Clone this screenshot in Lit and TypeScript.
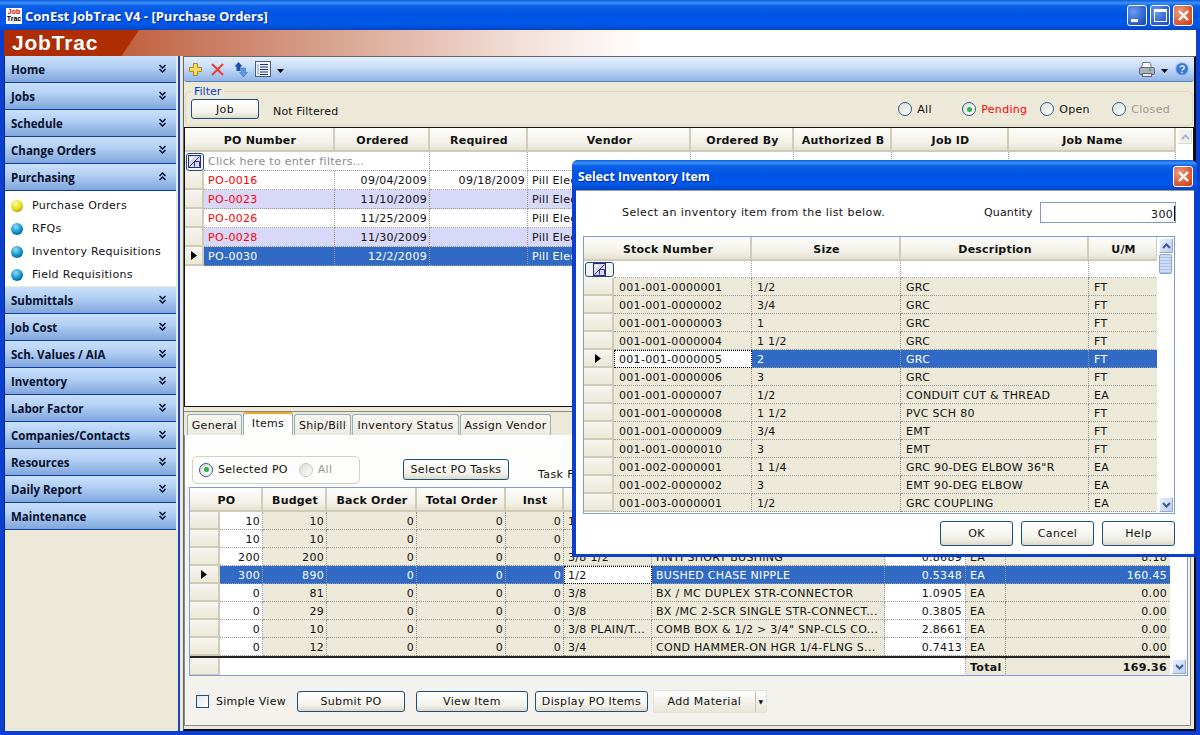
import { LitElement, html, css } from "lit";
import { customElement } from "lit/decorators.js";

type Col = { w: number; label: string; right?: boolean; white?: boolean; wide?: boolean };

const chev = (up = false) => html`<svg class="chev" width="7" height="9" viewBox="0 0 7 9">
  <path d="${up ? "M.5 4 3.500 1 6.500 4M.5 8 3.500 5 6.500 8" : "M.5 1 3.500 4 6.500 1M.5 5 3.500 8 6.500 5"}" fill="none" stroke="#06102c" stroke-width="1.500"/></svg>`;
const filterIcon = () => html`<svg width="13" height="13" viewBox="0 0 13 13">
  <rect x=".5" y=".5" width="12" height="12" fill="#d8d8f0" stroke="#2a2a80"/>
  <path d="M1.500 11.500 11.500 1.500M6.500 11.500V6.500h5v5" fill="none" stroke="#30308c"/><path d="M2 2h4L2 6z" fill="#fff"/></svg>`;
const scrollArrow = (up: boolean) => html`<svg width="9" height="6" viewBox="0 0 9 6"><path d="${up ? "M1 5 4.500 1.500 8 5" : "M1 1 4.500 4.500 8 1"}" fill="none" stroke="#3d5a9c" stroke-width="2"/></svg>`;
const rowArrow = () => html`<svg width="6" height="9"><path d="M0 0 6 4.500 0 9z" fill="#000"/></svg>`;
const caret = () => html`<svg width="7" height="4"><path d="M0 0h7L3.500 4z" fill="#000"/></svg>`;

const topCols: Col[] = [
  { w: 131, label: "PO Number" }, { w: 95, label: "Ordered", right: true }, { w: 98, label: "Required", right: true },
  { w: 163, label: "Vendor" }, { w: 103, label: "Ordered By" }, { w: 98, label: "Authorized B" }, { w: 117, label: "Job ID" }, { w: 167, label: "Job Name" },
];
const topRows = [
  ["PO-0016", "09/04/2009", "09/18/2009", "Pill Electric"],
  ["PO-0023", "11/10/2009", "", "Pill Electric"],
  ["PO-0026", "11/25/2009", "", "Pill Electric"],
  ["PO-0028", "11/30/2009", "", "Pill Electric"],
  ["PO-0030", "12/2/2009", "", "Pill Electric"],
];
const itemCols: Col[] = [
  { w: 43, label: "PO", right: true, white: true }, { w: 64, label: "Budget", right: true }, { w: 90, label: "Back Order", right: true },
  { w: 89, label: "Total Order", right: true }, { w: 58, label: "Inst", right: true }, { w: 88, label: "Size" }, { w: 233, label: "Description" },
  { w: 81, label: "Unit Cost", right: true, white: true, wide: true }, { w: 40, label: "U/M" }, { w: 165, label: "Extension", right: true, wide: true },
];
const itemRows = [
  ["10", "10", "0", "0", "0", "1", "CONDUIT", "0.0000", "EA", "0.00"],
  ["10", "10", "0", "0", "0", "", "", "0.0000", "EA", "0.00"],
  ["200", "200", "0", "0", "0", "3/8 1/2", "HNTI SHORT BUSHING", "0.8689", "EA", "8.18"],
  ["300", "890", "0", "0", "0", "1/2", "BUSHED CHASE NIPPLE", "0.5348", "EA", "160.45"],
  ["0", "81", "0", "0", "0", "3/8", "BX / MC DUPLEX STR-CONNECTOR", "1.0905", "EA", "0.00"],
  ["0", "29", "0", "0", "0", "3/8", "BX /MC 2-SCR SINGLE STR-CONNECT...", "0.3805", "EA", "0.00"],
  ["0", "10", "0", "0", "0", "3/8 PLAIN/T...", 'COMB BOX & 1/2 > 3/4" SNP-CLS CO...', "2.8661", "EA", "0.00"],
  ["0", "12", "0", "0", "0", "3/4", "COND HAMMER-ON HGR 1/4-FLNG S...", "0.7413", "EA", "0.00"],
];
const invCols: Col[] = [{ w: 138, label: "Stock Number" }, { w: 149, label: "Size" }, { w: 188, label: "Description" }, { w: 69, label: "U/M" }];
const invRows = [
  ["001-001-0000001", "1/2", "GRC", "FT"], ["001-001-0000002", "3/4", "GRC", "FT"], ["001-001-0000003", "1", "GRC", "FT"],
  ["001-001-0000004", "1 1/2", "GRC", "FT"], ["001-001-0000005", "2", "GRC", "FT"], ["001-001-0000006", "3", "GRC", "FT"],
  ["001-001-0000007", "1/2", "CONDUIT CUT & THREAD", "EA"], ["001-001-0000008", "1 1/2", "PVC SCH 80", "FT"], ["001-001-0000009", "3/4", "EMT", "FT"],
  ["001-001-0000010", "3", "EMT", "FT"], ["001-002-0000001", "1 1/4", 'GRC 90-DEG ELBOW 36"R', "EA"], ["001-002-0000002", "3", "EMT 90-DEG ELBOW", "EA"],
  ["001-003-0000001", "1/2", "GRC COUPLING", "EA"],
];
const navTop = ["Home", "Jobs", "Schedule", "Change Orders"];
const navBottom = ["Submittals", "Job Cost", "Sch. Values / AIA", "Inventory", "Labor Factor", "Companies/Contacts", "Resources", "Daily Report", "Maintenance"];
const navSub = ["Purchase Orders", "RFQs", "Inventory Requisitions", "Field Requisitions"];
const tabs = [{ t: "General", w: 55 }, { t: "Items", w: 50, on: true }, { t: "Ship/Bill", w: 57 }, { t: "Inventory Status", w: 107 }, { t: "Assign Vendor", w: 91 }];

@customElement("app-root")
export class AppRoot extends LitElement {
  static styles = css`
    :host { display: block; width: 1200px; height: 735px; overflow: hidden; font: 11px "DejaVu Sans", Verdana, sans-serif; color: #111; }
    * { box-sizing: border-box; }
    .window { position: relative; width: 1200px; height: 735px; display: flex; flex-direction: column; background: #0a3fd0; padding: 0 4px 4px; }
    .title { flex: 0 0 30px; margin: 0 -4px; padding: 2px 7px 0 6px; display: flex; align-items: center; gap: 3px;
      background: linear-gradient(#0a5ce0 0, #3d92f5 3px, #0a5fe8 6px, #0054e3 14px, #0058ea 24px, #0346c4 30px); }
    .title-text { color: #fff; font: bold 13px "Open Sans", "DejaVu Sans", sans-serif; text-shadow: 1px 1px 0 #0a2a8c; flex: 1; }
    .appicon { width: 16px; height: 16px; background: #fff; font: bold 7px/7px "Liberation Sans", sans-serif; color: #000; text-align: center; overflow: hidden; }
    .appicon b { display: block; color: #d00; }
    .winbtns { display: flex; gap: 3px; margin-top: -2px; }
    .wb { width: 20px; height: 21px; border: 1px solid #fff; border-radius: 3px; background: radial-gradient(circle at 30% 30%, #6d9af0, #2a5bd0 70%, #1c46b0); display: flex; align-items: center; justify-content: center; }
    .wb.close { background: radial-gradient(circle at 30% 30%, #ec9a80, #d9542a 70%, #c43c12); }
    .banner { flex: 0 0 26px; position: relative; display: flex; align-items: center; padding-left: 8px;
      background: linear-gradient(90deg, #c0603f 117px, #d49a85 300px, #f3e0d9 520px, #fff 640px); overflow: hidden; }
    .banner::before { content: ""; position: absolute; left: 0; top: 0; bottom: 0; width: 135px; background: #ae2d02; clip-path: polygon(0 0, 100% 0, 87% 100%, 0 100%); }
    .brand { position: relative; color: #fff; font: bold 21px "Liberation Sans", sans-serif; letter-spacing: .8px; }
    .body { flex: 1; min-height: 0; display: flex; }
    .side { flex: 0 0 172px; background: #ece9d8; border-left: 1px solid #0a2a8c; display: flex; flex-direction: column; }
    .nav { flex: none; height: 27px; padding: 0 10px 0 6px; display: flex; align-items: center; justify-content: space-between; font: bold 11.5px "Open Sans", "DejaVu Sans", sans-serif; color: #06102c;
      background: linear-gradient(#c9e0fb, #b4d0f4 40%, #7fa6dc); border-bottom: 1px solid #0f3ea0; }
    .chev { margin-top: -2px; }
    .sub { flex: none; height: 96px; background: #fff; padding: 3px 0 0 6px; border-bottom: 1px solid #ece9d8; }
    .sub div { height: 23px; display: flex; align-items: center; gap: 9px; letter-spacing: .3px; }
    .ball { width: 12px; height: 12px; border-radius: 50%; background: radial-gradient(circle at 40% 30%, #8fdcf8, #0f8cc8 55%, #063a66); }
    .ball.y { background: radial-gradient(circle at 40% 30%, #fffca0, #e0d810 55%, #6a6400); }
    .split { flex: 0 0 7px; background: #ece9d8; }
    .split i { display: block; margin-left: 2px; width: 2px; height: 100%; background: #1c46b8; }
    .main { flex: 1; min-width: 0; display: flex; flex-direction: column; background: #ece9d8; border: 1px solid #666; border-width: 1px 2px 2px 1px; border-right-color: #0a0a20; border-bottom-color: #0a0a20; }
    .tools { flex: 0 0 25px; display: flex; align-items: center; padding: 0 5px 0 5px; background: linear-gradient(#e3effd, #c6dcf8 45%, #8fb3e6); border-bottom: 1px solid #5a80c0; border-radius: 0 0 3px 3px; }
    .tools svg { flex: none; }
    .t-x { margin-left: 9px; } .t-a { margin-left: 10px; } .t-l { margin-left: 7px; } .t-c { margin-left: 6px; }
    .t-c2 { margin: 0 7px 0 6px; }
    .grow { flex: 1; }
    .filter { flex: 0 0 35px; position: relative; margin: 9px 1px 1px 1px; padding: 7px 6px 0 5px; border: 1px solid #dcd8c4; border-radius: 5px; display: flex; align-items: flex-start; gap: 14px; }
    .legend { position: absolute; left: 5px; top: -6px; background: #ece9d8; padding: 0 3px; color: #0a3fd0; line-height: 11px; }
    .btn { display: flex; align-items: center; justify-content: center; height: 21px; border: 1px solid #1c4f7c; border-radius: 3px; background: linear-gradient(#fff, #f3f2ea 70%, #dcd8c8); letter-spacing: .35px; white-space: nowrap; flex: none; }
    .flt-btn { width: 68px; height: 20px; }
    .nf { margin-top: 6px; letter-spacing: .15px; }
    .radio { flex: none; width: 14px; height: 14px; border-radius: 50%; border: 1px solid #2f5c8c; background: linear-gradient(135deg, #dcdcd4, #fff); display: flex; align-items: center; justify-content: center; }
    .radio.on::after { content: ""; width: 5px; height: 5px; border-radius: 50%; background: #2eb04a; }
    .radio.off { border-color: #c8c8bc; margin-left: 6px; }
    .rg { display: flex; align-items: center; gap: 5px; letter-spacing: .3px; }
    .rg.a { width: 64px; } .rg.p { width: 78px; } .rg.o { width: 72px; }
    .radios { display: flex; margin-top: 3px; margin-right: 16px; }
    .red { color: #f00; }
    .dim { color: #9a9a90; }
    .grid { display: flex; flex-direction: column; background: #fff; overflow: hidden; }
    .top-grid { flex: 0 0 280px; border: 1px solid #111; position: relative; }
    .row { display: flex; flex: none; }
    .hc { height: 24px; flex: none; display: flex; align-items: center; justify-content: center; padding: 3px 0 0 2px; font-weight: bold; letter-spacing: .2px; white-space: nowrap; overflow: hidden;
      background: linear-gradient(#fdfdfb, #f2f0e6 70%, #e4e1d0); border-right: 2px solid #d0ccb8; border-bottom: 2px solid #cfcbb8; }
    .inv-grid .hc { padding-top: 2px; }
    .ind { flex: none; display: flex; align-items: center; justify-content: center; background: linear-gradient(#f6f5ef, #ece9d8); border-right: 2px solid #cfcbb8; border-bottom: 2px solid #cfcbb8; }
    .ind.fi { background: #fff; border: 0; }
    .fbtn { display: flex; align-items: center; justify-content: center; border: 1px solid #1c4f7c; border-radius: 3px; background: #f4f3ec; }
    .fbtn.sq { width: 18px; height: 18px; }
    .fbtn.wd { width: 29px; height: 15px; }
    .c { flex: none; overflow: hidden; white-space: nowrap; padding: 0 2px 0 4px; display: flex; align-items: center; border-right: 1px dotted #999; border-bottom: 1px dotted #999; letter-spacing: .3px; background: #ece9d8; }
    .item-grid .c { padding-top: 1px; }
    .inv-grid .c { padding-left: 5px; padding-top: 1px; }
    .c.r { justify-content: flex-end; }
    .c.pw { padding-right: 3px; }
    .c.w { background: #fff; }
    .c.lav { background: #d8d8f8; }
    .c.sel { background: #316ac5; color: #fff; }
    .c.focus { background: #fff; color: #111; outline: 1px dotted #000; outline-offset: -1px; }
    .c.w0 { background: #fff; color: #8c8c8c; }
    .c.blank { background: #fff; }
    .sb { position: absolute; top: 0; right: 0; bottom: 0; width: 17px; background: #fff; display: flex; flex-direction: column; justify-content: space-between; }
    .sbb { height: 15px; width: 14px; margin: 1px 1px 1px 2px; flex: none; display: flex; align-items: center; justify-content: center; background: linear-gradient(135deg, #e6eefb, #bcd0f2); border: 1px solid #f4f8ff; border-right-color: #9ab; border-bottom-color: #9ab; }
    .sbb.pale { opacity: .45; background: #e4e1d0; }
    .sbb.none { visibility: hidden; }
    .thumb { position: absolute; left: 2px; top: 17px; width: 13px; height: 20px; background: repeating-linear-gradient(#cfdcf4 0 2px, #a9c0ea 2px 3px); border: 1px solid #8aa6d8; border-radius: 2px; }
    .lsplit { flex: 0 0 4px; background: #ece9d8; }
    .lower { flex: 1; min-height: 0; display: flex; flex-direction: column; background: #ece9d8; border-top: 1px solid #8a8a84; padding-bottom: 3px; }
    .tabs { flex: 0 0 23px; display: flex; align-items: flex-end; padding-left: 3px; gap: 1px; }
    .tab { height: 21px; display: flex; align-items: center; justify-content: center; background: linear-gradient(#f7f6f0, #eceae0); border: 1px solid #98aeb8; border-bottom: 0; border-radius: 3px 3px 0 0; letter-spacing: .3px; }
    .tab.on { height: 23px; background: #fdfdfc; border-top: 2px solid #f0a828; padding-bottom: 3px; }
    .panel { flex: 1; min-height: 0; border: 1px solid #8a8a84; border-top: 0; margin-right: 3px; background: #f3f2ec; display: flex; flex-direction: column; }
    .opts { flex: 0 0 52px; background: #fdfdfc; display: flex; align-items: flex-end; padding: 0 0 3px 7px; }
    .optbox { width: 168px; height: 28px; border: 1px solid #d4d2c4; border-radius: 5px; display: flex; align-items: center; padding: 0 0 2px 6px; gap: 5px; letter-spacing: .3px; }
    .optbox .radio { margin-top: 1px; }
    .taskbtn { width: 106px; margin-left: 43px; margin-bottom: 4px; }
    .taskf { margin-left: 29px; margin-bottom: 3px; letter-spacing: .4px; }
    .item-grid { flex: 0 0 189px; margin: 0 0 0 4px; position: relative; border: 1px solid #7e9cd6; width: 999px; }
    .tot { border-top: 2px solid #222; }
    .bottom { flex: 1; display: flex; align-items: center; padding: 2px 0 0 11px; }
    .check { width: 13px; height: 13px; border: 1px solid #1c4f7c; background: linear-gradient(135deg,#e8e8e0,#fff); margin-right: 7px; }
    .sv { margin-right: 11px; letter-spacing: .25px; }
    .b-sub { width: 108px; } .b-view { width: 112px; margin-left: 11px; } .b-disp { width: 113px; margin-left: 7px; }
    .addm { height: 23px; display: flex; border: 1px solid #e4e2d8; background: linear-gradient(#fff,#e8e5d8); width: 114px; margin-left: 5px; }
    .addm span { flex: 1; display: flex; align-items: center; justify-content: center; letter-spacing: .35px; border-right: 1px solid #c8c4b0; }
    .addm i { width: 10px; display: flex; align-items: center; justify-content: center; font-size: 6px; font-style: normal; }
    .dialog { position: absolute; left: 572px; top: 160px; width: 625px; height: 397px; background: #0a3fd0; border-radius: 6px 6px 0 0; padding: 0 3px 3px 4px; display: flex; flex-direction: column; }
    .dtitle { flex: 0 0 30px; margin: 0 -3px 0 -4px; padding: 2px 4px 0 6px; display: flex; align-items: center; justify-content: space-between; border-radius: 6px 6px 0 0; color: #fff; font: bold 12.3px "Open Sans", "DejaVu Sans", sans-serif; text-shadow: 1px 1px 0 #0a2a8c;
      background: linear-gradient(#0a5ce0 0, #3d92f5 3px, #0a5fe8 6px, #0054e3 14px, #0058ea 24px, #0346c4 30px); }
    .dbody { flex: 1; background: #fff; border-top: 1px solid #999; display: flex; flex-direction: column; padding: 11px 19px 0 7px; }
    .dq { flex: 0 0 34px; display: flex; padding-left: 39px; margin-right: -1px; }
    .dq .l { flex: 1; padding-top: 4px; letter-spacing: .42px; }
    .dq .q { width: 56px; padding-top: 4px; letter-spacing: .15px; }
    .input { width: 136px; height: 21px; border: 1px solid #7e9cc0; text-align: right; padding: 3px 0 0 0; letter-spacing: .3px; }
    .input b { display: inline-block; width: 1px; height: 15px; background: #000; vertical-align: -3px; margin-left: 1px; }
    .inv-grid { flex: 0 0 278px; width: 592px; position: relative; border: 1px solid #7e9cd6; }
    .dbtns { flex: 1; display: flex; justify-content: flex-end; gap: 8px; padding-top: 7px; }
    .dbtns .btn { width: 73px; height: 25px; }
  `;

  private header(cols: Col[], indW: number) {
    return html`<div class="row">
      <div class="hc" style="width:${indW + cols[0].w}px">${cols[0].label}</div>
      ${cols.slice(1).map((c) => html`<div class="hc" style="width:${c.w}px">${c.label}</div>`)}
    </div>`;
  }

  private topGrid() {
    const cols = topCols;
    return html`<div class="grid top-grid">
      ${this.header(cols, 19)}
      <div class="row" style="height:19px">
        <div class="ind fi" style="width:19px"><span class="fbtn sq">${filterIcon()}</span></div>
        <div class="c w0" style="width:${cols[0].w + cols[1].w}px">Click here to enter filters...</div>
        ${cols.slice(2).map((c) => html`<div class="c w0" style="width:${c.w}px"></div>`)}
      </div>
      ${topRows.map((r, i) => {
        const sel = i === 4, lav = i % 2 === 1;
        const cls = sel ? "sel" : lav ? "lav" : "w";
        return html`<div class="row" style="height:19px">
          <div class="ind" style="width:19px">${sel ? rowArrow() : ""}</div>
          ${cols.map((c, j) => html`<div class="c ${cls} ${c.right ? "r" : ""} ${j === 0 && !sel ? "red" : ""}" style="width:${c.w}px">${r[j] ?? ""}</div>`)}
        </div>`;
      })}
      <div class="sb"><div class="sbb pale">${scrollArrow(true)}</div></div>
    </div>`;
  }

  private itemGrid() {
    const cols = itemCols;
    return html`<div class="grid item-grid">
      ${this.header(cols, 30)}
      ${itemRows.map((r, i) => {
        const sel = i === 3;
        return html`<div class="row" style="height:18px">
          <div class="ind" style="width:30px">${sel ? rowArrow() : ""}</div>
          ${cols.map((c, j) => html`<div class="c ${c.right ? "r" : ""} ${c.wide ? "pw" : ""} ${sel ? (j === 5 ? "focus" : "sel") : c.white ? "w" : ""}" style="width:${c.w}px">${r[j]}</div>`)}
        </div>`;
      })}
      <div class="row tot" style="height:20px">
        <div class="ind" style="width:30px"></div>
        <div class="c blank" style="width:746px"></div>
        <div class="c" style="width:40px"><b>Total</b></div>
        <div class="c r pw" style="width:165px"><b>169.36</b></div>
      </div>
      <div class="sb"><div class="sbb none"></div><div class="sbb">${scrollArrow(false)}</div></div>
    </div>`;
  }

  private invGrid() {
    const cols = invCols;
    return html`<div class="grid inv-grid">
      ${this.header(cols, 30)}
      <div class="row" style="height:17px">
        <div class="ind fi" style="width:30px"><span class="fbtn wd">${filterIcon()}</span></div>
        ${cols.map((c) => html`<div class="c blank" style="width:${c.w}px"></div>`)}
      </div>
      ${invRows.map((r, i) => {
        const sel = i === 4;
        return html`<div class="row" style="height:18px">
          <div class="ind" style="width:30px">${sel ? rowArrow() : ""}</div>
          ${cols.map((c, j) => html`<div class="c ${sel ? (j === 0 ? "focus" : "sel") : ""}" style="width:${c.w}px">${r[j]}</div>`)}
        </div>`;
      })}
      <div class="sb"><div class="sbb">${scrollArrow(true)}</div><div class="thumb"></div><div class="sbb">${scrollArrow(false)}</div></div>
    </div>`;
  }

  private closeX() {
    return html`<svg width="13" height="13" viewBox="0 0 13 13"><path d="M2 2 11 11M11 2 2 11" stroke="#fff" stroke-width="2.400"/></svg>`;
  }

  render() {
    return html`<div class="window">
      <div class="title">
        <div class="appicon"><b>Job</b>Trac</div>
        <div class="title-text">ConEst JobTrac V4 - [Purchase Orders]</div>
        <div class="winbtns">
          <div class="wb"><svg width="12" height="13"><rect x="0" y="10" width="7" height="3" fill="#fff"/></svg></div>
          <div class="wb"><svg width="13" height="13"><rect x=".5" y=".5" width="12" height="12" fill="none" stroke="#fff"/><rect x="0" y="0" width="13" height="3" fill="#fff"/></svg></div>
          <div class="wb close">${this.closeX()}</div>
        </div>
      </div>
      <div class="banner"><div class="brand">JobTrac</div></div>
      <div class="body">
        <div class="side">
          ${navTop.map((n) => html`<div class="nav"><span>${n}</span>${chev()}</div>`)}
          <div class="nav"><span>Purchasing</span>${chev(true)}</div>
          <div class="sub">${navSub.map((s, i) => html`<div><span class="ball ${i === 0 ? "y" : ""}"></span>${s}</div>`)}</div>
          ${navBottom.map((n) => html`<div class="nav"><span>${n}</span>${chev()}</div>`)}
        </div>
        <div class="split"><i></i></div>
        <div class="main">
          <div class="tools">
            <svg width="13" height="13" viewBox="0 0 13 13"><path d="M4.500.5h4v4h4v4h-4v4h-4v-4h-4v-4h4z" fill="#f8d860" stroke="#b08a18"/></svg>
            <svg class="t-x" width="13" height="13" viewBox="0 0 13 13"><path d="M1 1 12 12M12 1 1 12" stroke="#e8402a" stroke-width="2"/></svg>
            <svg class="t-a" width="14" height="15" viewBox="0 0 14 15"><path d="M4.500 0 8.500 4.500H6.500V9H2.500V4.500H.5z" fill="#1f4fb0"/><path d="M9.500 15 5.500 10.500H7.500V6H11.500V10.500H13.500z" fill="#5a9ae0" stroke="#2a5cb0" stroke-width=".5"/></svg>
            <svg class="t-l" width="16" height="16" viewBox="0 0 16 16"><rect x=".5" y=".5" width="15" height="15" fill="#eef2fa" stroke="#4a5a78"/><path d="M5 3.500h8M5 6h8M5 8.500h8M5 11h8M5 13.500h8" stroke="#1f2f78"/><path d="M3 3v11" stroke="#8a9ac0"/></svg>
            <span class="t-c">${caret()}</span>
            <div class="grow"></div>
            <svg width="16" height="15" viewBox="0 0 16 15"><path d="M4 .5h7l1.500 5H2.500z" fill="#fff" stroke="#778"/><rect x=".5" y="5.500" width="15" height="7" rx="1.500" fill="#a9b2bc" stroke="#667"/><rect x="3.500" y="11.500" width="9" height="3" fill="#e4e6ea" stroke="#667"/><rect x="10" y="7" width="2" height="2" fill="#2eb04a"/></svg>
            <span class="t-c2">${caret()}</span>
            <svg width="14" height="14" viewBox="0 0 15 15"><circle cx="7.500" cy="7.500" r="6.800" fill="#3a78d8" stroke="#a8c0e8"/><path d="M5.500 5.800C5.500 3.500 10 3.500 10 6c0 1.800-2.500 1.700-2.500 3.500" fill="none" stroke="#fff" stroke-width="1.400"/><rect x="6.800" y="10.500" width="1.500" height="1.500" fill="#fff"/></svg>
          </div>
          <div class="filter">
            <div class="legend">Filter</div>
            <div class="btn flt-btn">Job</div>
            <div class="nf">Not Filtered</div>
            <div class="grow"></div>
            <div class="radios">
              <div class="rg a"><span class="radio"></span>All</div>
              <div class="rg p"><span class="radio on"></span><span class="red">Pending</span></div>
              <div class="rg o"><span class="radio"></span>Open</div>
              <div class="rg"><span class="radio"></span><span class="dim">Closed</span></div>
            </div>
          </div>
          ${this.topGrid()}
          <div class="lsplit"></div>
          <div class="lower">
            <div class="tabs">
              ${tabs.map((t) => html`<div class="tab ${t.on ? "on" : ""}" style="width:${t.w}px">${t.t}</div>`)}
            </div>
            <div class="panel">
              <div class="opts">
                <div class="optbox"><span class="radio on"></span>Selected PO<span class="radio off"></span><span class="dim">All</span></div>
                <div class="btn taskbtn">Select PO Tasks</div>
                <div class="taskf">Task Filter</div>
              </div>
              ${this.itemGrid()}
              <div class="bottom">
                <div class="check"></div><div class="sv">Simple View</div>
                <div class="btn b-sub">Submit PO</div>
                <div class="btn b-view">View Item</div>
                <div class="btn b-disp">Display PO Items</div>
                <div class="addm"><span>Add Material</span><i>▼</i></div>
              </div>
            </div>
          </div>
        </div>
      </div>
      <div class="dialog">
        <div class="dtitle"><span>Select Inventory Item</span><div class="wb close">${this.closeX()}</div></div>
        <div class="dbody">
          <div class="dq"><div class="l">Select an inventory item from the list below.</div><div class="q">Quantity</div><div class="input">300<b></b></div></div>
          ${this.invGrid()}
          <div class="dbtns"><div class="btn">OK</div><div class="btn">Cancel</div><div class="btn">Help</div></div>
        </div>
      </div>
    </div>`;
  }
}
